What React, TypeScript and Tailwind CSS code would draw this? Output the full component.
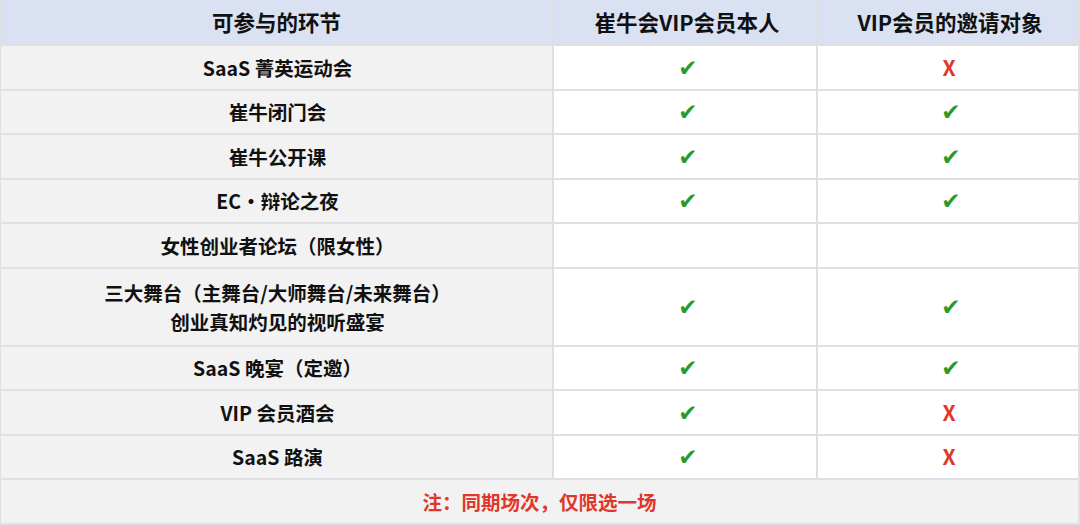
import React from 'react';

type Mark = 'yes' | 'no' | null;

const rows: { label: string[]; vip: Mark; guest: Mark }[] = [
  { label: ['SaaS 菁英运动会'], vip: 'yes', guest: 'no' },
  { label: ['崔牛闭门会'], vip: 'yes', guest: 'yes' },
  { label: ['崔牛公开课'], vip: 'yes', guest: 'yes' },
  { label: ['EC・辩论之夜'], vip: 'yes', guest: 'yes' },
  { label: ['女性创业者论坛（限女性）'], vip: null, guest: null },
  { label: ['三大舞台（主舞台/大师舞台/未来舞台）', '创业真知灼见的视听盛宴'], vip: 'yes', guest: 'yes' },
  { label: ['SaaS 晚宴（定邀）'], vip: 'yes', guest: 'yes' },
  { label: ['VIP 会员酒会'], vip: 'yes', guest: 'no' },
  { label: ['SaaS 路演'], vip: 'yes', guest: 'no' },
];

const Cell = ({ mark }: { mark: Mark }) => (
  <div className="bg-white flex items-center justify-center">
    {mark === 'yes' && (
      <span className="text-[#2b9a2b] text-[23px] leading-none pl-[6px] pt-[2px]" style={{ fontFamily: '"DejaVu Sans", sans-serif' }}>
        ✔
      </span>
    )}
    {mark === 'no' && <span className="text-[#e2372c] text-[21px] font-bold leading-none pl-[2px]">X</span>}
  </div>
);

const App = () => {
  return (
    <div
      className="w-[1080px] h-[525px] bg-[#dfdfe4] grid grid-cols-[551px_262px_1fr] grid-rows-[44px_repeat(5,42.5px)_76px_repeat(4,42.5px)] gap-[2px] pl-[1px] pr-[2px] pb-[2px] text-[#111] font-bold"
      style={{ fontFamily: '"Noto Sans CJK SC", "Noto Sans", sans-serif' }}
    >
      <div className="bg-[#d9e1f2] flex items-center justify-center text-[21.5px]">可参与的环节</div>
      <div className="bg-[#d9e1f2] flex items-center justify-center text-[21.5px] pl-[4px]">崔牛会VIP会员本人</div>
      <div className="bg-[#d9e1f2] flex items-center justify-center text-[21.5px] pl-[4px]">VIP会员的邀请对象</div>

      {rows.map((r, i) => (
        <React.Fragment key={i}>
          <div className="bg-[#f2f2f2] flex flex-col items-center justify-center text-[19.5px] leading-[29px] pl-[2px]">
            {r.label.map((t) => (
              <span key={t}>{t}</span>
            ))}
          </div>
          <Cell mark={r.vip} />
          <Cell mark={r.guest} />
        </React.Fragment>
      ))}

      <div className="col-span-3 bg-[#f2f2f2] flex items-center justify-center text-[19.5px] text-[#e0372d]">
        注：同期场次，仅限选一场
      </div>
    </div>
  );
};

export default App;
